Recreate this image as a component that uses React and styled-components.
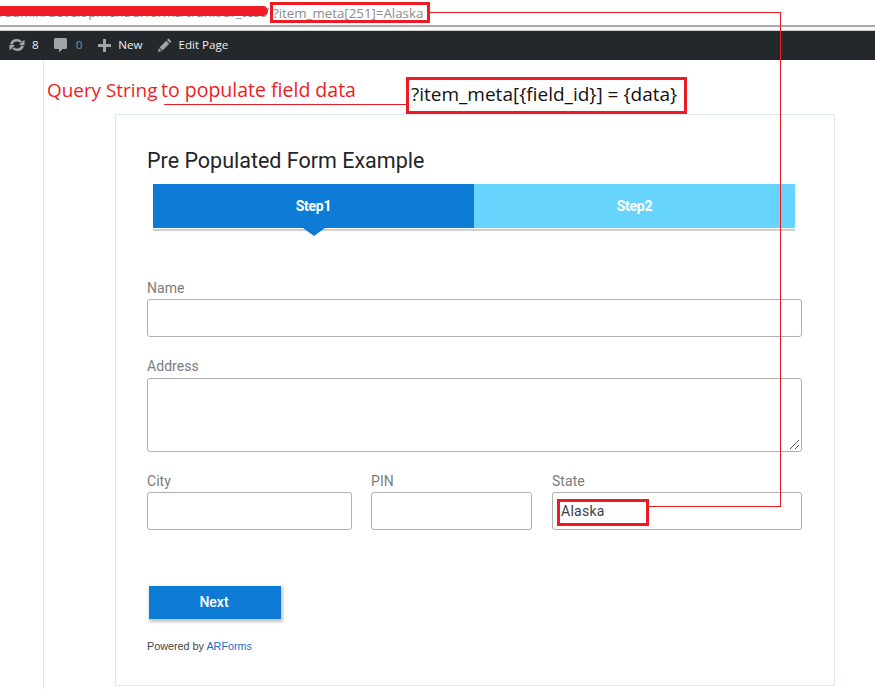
import React from "react";
import styled, { createGlobalStyle } from "styled-components";

const Global = createGlobalStyle`
  html, body { margin: 0; padding: 0; background: #fff; }
  * { box-sizing: border-box; }
`;

const RED = "#ed1c24";

const Page = styled.div`
  position: relative;
  width: 875px;
  height: 689px;
  overflow: hidden;
  background: #fff;
  font-family: Roboto, "Liberation Sans", sans-serif;
`;

const UrlBar = styled.div`
  height: 27px;
  border-bottom: 2px solid #a9a9a9;
  padding: 3px 0 0 0;
  font-family: "Open Sans", "Liberation Sans", sans-serif;
  font-size: 13px;
  line-height: 18px;
  color: #8b8b8b;
  white-space: nowrap;
`;

const BarGap = styled.div`
  height: 4px;
  background: #fafafa;
  border-bottom: 1px solid #d0d0d0;
`;

const AdminBar = styled.div`
  height: 29px;
  background: #23282d;
  display: flex;
  align-items: center;
  padding: 0 0 1px 9px;
  font-family: "Open Sans", "Liberation Sans", sans-serif;
  font-size: 11.6px;
  color: #eee;
`;

const AdminItem = styled.div`
  display: flex;
  align-items: center;
  gap: ${(p) => p.$gap || 6}px;
  margin-right: ${(p) => p.$mr || 15}px;
  color: ${(p) => (p.$muted ? "#8a8e92" : "#eee")};
  svg { display: block; }
  span { position: relative; top: -1px; }
`;

const Content = styled.div`
  margin-left: 43px;
  height: 629px;
  border-left: 1px solid #e5e5e5;
  padding: 54px 0 0 71px;
`;

const Card = styled.div`
  width: 720px;
  height: 572px;
  border: 1px solid #dfe8f8;
  padding: 33px 32px 0 31px;
`;

const Title = styled.h1`
  margin: 0;
  font-size: 21.5px;
  font-weight: 400;
  line-height: 26px;
  color: #22262a;
`;

const Steps = styled.div`
  display: flex;
  margin: 10px 7px 0 6px;
  height: 47px;
  border-bottom: 2px solid #cfcfcf;
`;

const Step = styled.div`
  position: relative;
  flex: 1;
  height: 44px;
  display: flex;
  align-items: center;
  justify-content: center;
  background: ${(p) => (p.$active ? "#0e7cd6" : "#66d4fd")};
  color: #fff;
  font-size: 14px;
  font-weight: 700;
  letter-spacing: -0.25px;
  ${(p) =>
    p.$active &&
    `
    &::after {
      content: "";
      position: absolute;
      left: 50%;
      top: 44px;
      margin-left: -11px;
      border-left: 11px solid transparent;
      border-right: 11px solid transparent;
      border-top: 8px solid #0e7cd6;
    }
  `}
`;

const Field = styled.div`
  display: flex;
  flex-direction: column;
  width: ${(p) => (p.$w ? p.$w + "px" : "auto")};
  margin-top: ${(p) => p.$mt || 0}px;
  margin-left: ${(p) => p.$ml || 0}px;
`;

const Label = styled.label`
  font-size: 14px;
  line-height: 16px;
  letter-spacing: 0.05px;
  color: #7b7b7b;
  margin-bottom: ${(p) => p.$mb || 3}px;
`;

const Input = styled.div`
  position: relative;
  height: ${(p) => p.$h || 38}px;
  border: 1px solid #b0b0b0;
  border-radius: 3px;
  background: #fff;
  padding: 0 0 0 8px;
  display: flex;
  align-items: center;
  font-size: 14px;
  letter-spacing: 0.25px;
  color: #3a3f45;
`;

const Grip = styled.svg`
  position: absolute;
  right: 1px;
  bottom: 1px;
`;

const Row = styled.div`
  display: flex;
  margin-top: 21px;
`;

const NextButton = styled.button`
  display: block;
  margin: 56px 0 0 2px;
  width: 132px;
  height: 33px;
  padding: 0 2px 2px 0;
  border: 0;
  background: #0e7cd6;
  color: #fff;
  font-family: Roboto, sans-serif;
  font-size: 14px;
  font-weight: 500;
  box-shadow: 1px 2px 3px 1px rgba(0, 0, 0, 0.22);
`;

const Powered = styled.div`
  margin-top: 20px;
  font-family: "Liberation Sans", sans-serif;
  font-size: 10.8px;
  line-height: 14px;
  color: #444;
  a { color: #1a6fc9; text-decoration: none; }
`;

const RedBox = styled.div`
  position: absolute;
  left: ${(p) => p.$x}px;
  top: ${(p) => p.$y}px;
  width: ${(p) => p.$w}px;
  height: ${(p) => p.$h}px;
  border: 3px solid ${RED};
  background: ${(p) => (p.$fill ? "#fff" : "transparent")};
  display: flex;
  align-items: center;
  white-space: nowrap;
`;

const UrlQuery = styled(RedBox)`
  font-family: "Open Sans", "Liberation Sans", sans-serif;
  font-size: 13.3px;
  color: #8b8b8b;
`;

const QueryText = styled(RedBox)`
  padding: 0 0 3px 2px;
  font-family: "Open Sans", "Liberation Sans", sans-serif;
  font-size: 19px;
  color: #111;
`;

const RedLine = styled.div`
  position: absolute;
  left: ${(p) => p.$x}px;
  top: ${(p) => p.$y}px;
  width: ${(p) => p.$w}px;
  height: ${(p) => p.$h}px;
  background: ${RED};
`;

const Scribble = styled.div`
  position: absolute;
  left: -4px;
  top: 6px;
  width: 272px;
  height: 10px;
  background: ${RED};
  border-radius: 0 5px 5px 0;
`;

const Annotation = styled.div`
  position: absolute;
  left: ${(p) => p.$x}px;
  top: 78px;
  padding-right: 1px;
  background: #fff;
  font-family: "Open Sans", "Liberation Sans", sans-serif;
  font-size: ${(p) => p.$size}px;
  line-height: 24px;
  color: ${RED};
  white-space: nowrap;
`;

function UpdateIcon() {
  return (
    <svg width="16" height="16" viewBox="0 0 16 16" fill="none" stroke="#a0a5aa" strokeWidth="2.6">
      <path d="M2.400 7.400C3 4.700 5.300 3.300 8 3.300c1.700 0 3 .6 4 1.700" />
      <path d="M13.600 8.600C13 11.300 10.700 12.700 8 12.700c-1.700 0-3-.6-4-1.700" />
      <path d="M15.500 2.500v5.500H10z" fill="#a0a5aa" stroke="none" />
      <path d="M.5 13.500V8H6z" fill="#a0a5aa" stroke="none" />
    </svg>
  );
}

function CommentIcon() {
  return (
    <svg width="13" height="15" viewBox="0 0 13 15" fill="#a0a5aa">
      <path d="M1.500 0h10A1.500 1.500 0 0 1 13 1.500v8a1.500 1.500 0 0 1-1.500 1.500H8.500L5 14.500V11H1.500A1.500 1.500 0 0 1 0 9.500v-8A1.500 1.500 0 0 1 1.500 0z" />
    </svg>
  );
}

function PlusIcon() {
  return (
    <svg width="13" height="13" viewBox="0 0 13 13" fill="#a0a5aa">
      <path d="M5 0h3v5h5v3H8v5H5V8H0V5h5z" />
    </svg>
  );
}

function PencilIcon() {
  return (
    <svg width="14" height="14" viewBox="0 0 14 14" fill="#a0a5aa">
      <path d="M10.500.5 13.500 3.500 12 5 9 2z" />
      <path d="M8.200 2.800 11.200 5.800 4.500 12.500 1.500 9.500z" />
      <path d="M.9 10.300 3.700 13.100 0 14z" />
    </svg>
  );
}

export default function App() {
  return (
    <Page>
      <Global />
      <UrlBar>/admin/development/arforms/trunk/ar_test/</UrlBar>
      <BarGap />
      <AdminBar>
        <AdminItem $gap={7} $mr={15}><UpdateIcon /><span>8</span></AdminItem>
        <AdminItem $gap={9} $mr={16} $muted><CommentIcon /><span>0</span></AdminItem>
        <AdminItem $gap={7} $mr={15}><PlusIcon /><span>New</span></AdminItem>
        <AdminItem $gap={7}><PencilIcon /><span>Edit Page</span></AdminItem>
      </AdminBar>
      <Content>
        <Card>
          <Title>Pre Populated Form Example</Title>
          <Steps>
            <Step $active>Step1</Step>
            <Step>Step2</Step>
          </Steps>
          <Field $mt={49}>
            <Label>Name</Label>
            <Input />
          </Field>
          <Field $mt={21}>
            <Label $mb={4}>Address</Label>
            <Input $h={74}>
              <Grip width="12" height="12" viewBox="0 0 12 12" fill="none" stroke="#555" strokeWidth="1">
                <path d="M2 11 11 2M7 11l4-4" />
              </Grip>
            </Input>
          </Field>
          <Row>
            <Field $w={205}>
              <Label>City</Label>
              <Input />
            </Field>
            <Field $w={161} $ml={19}>
              <Label>PIN</Label>
              <Input />
            </Field>
            <Field $w={250} $ml={20}>
              <Label>State</Label>
              <Input>Alaska</Input>
            </Field>
          </Row>
          <NextButton>Next</NextButton>
          <Powered>Powered by <a href="#">ARForms</a></Powered>
        </Card>
      </Content>

      <Scribble />
      <UrlQuery $x={270} $y={2} $w={160} $h={21}>?item_meta[251]=Alaska</UrlQuery>
      <RedLine $x={430} $y={12} $w={351} $h={1} />
      <RedLine $x={780} $y={12} $w={1} $h={495} />
      <RedLine $x={648} $y={506} $w={133} $h={1} />
      <RedBox $x={557} $y={499} $w={92} $h={27} />
      <Annotation $x={47} $size={18.9}>Query String</Annotation>
      <Annotation $x={161} $size={19.5}>to populate field data</Annotation>
      <RedLine $x={164} $y={104} $w={243} $h={1} />
      <QueryText $x={406} $y={77} $w={281} $h={37} $fill>?item_meta[&#123;field_id&#125;] = &#123;data&#125;</QueryText>
    </Page>
  );
}
